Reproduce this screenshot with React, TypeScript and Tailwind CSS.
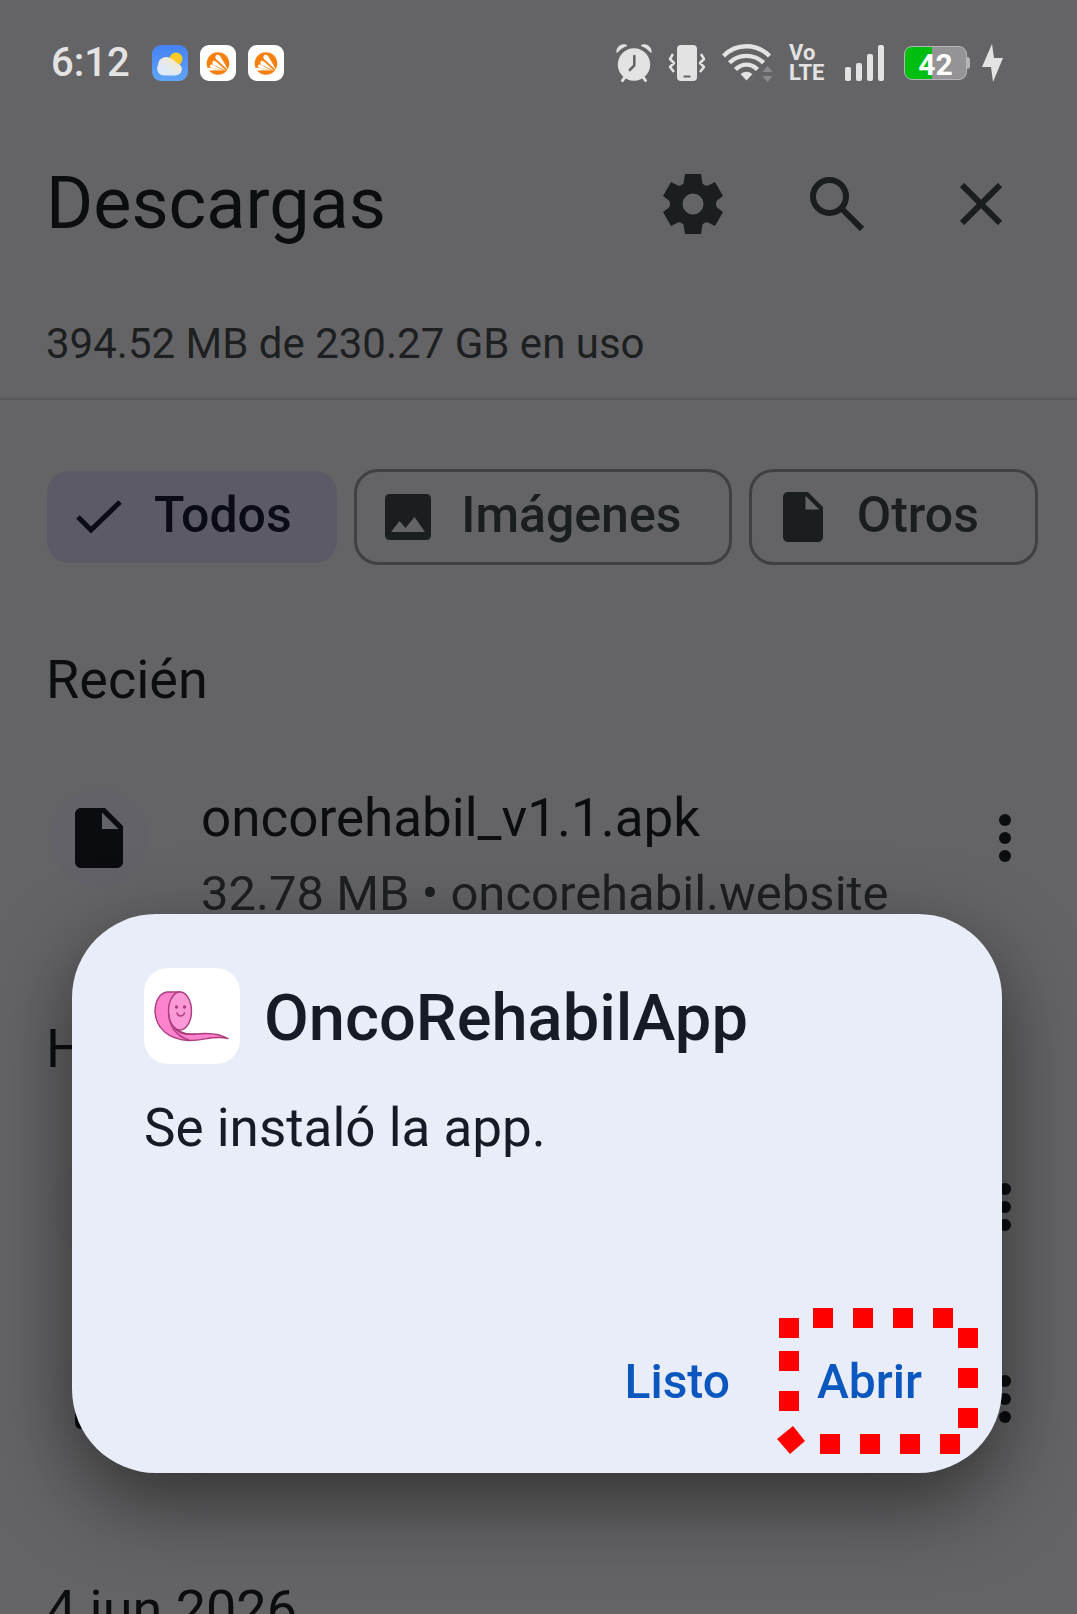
import React from 'react';

interface IconProps {
  className?: string;
}

interface DownloadItem {
  id: string;
  name: string;
  size: string;
  source: string;
}

interface DownloadGroup {
  label: string;
  items: DownloadItem[];
}

const groups: DownloadGroup[] = [
  {
    label: 'Recién',
    items: [{ id: 'a', name: 'oncorehabil_v1.1.apk', size: '32.78 MB', source: 'oncorehabil.website' }],
  },
  {
    label: 'Hoy',
    items: [
      { id: 'b', name: 'oncorehabil_v1.1.apk', size: '32.78 MB', source: 'oncorehabil.website' },
      { id: 'c', name: 'oncorehabil_v1.1.apk', size: '32.78 MB', source: 'oncorehabil.website' },
    ],
  },
  { label: '4 jun 2026', items: [] },
];

const AlarmIcon = ({ className }: IconProps) => (
  <svg viewBox="0 0 36 38" className={className} fill="#e3e3e3">
    <path d="M1 8.500C0 3 6-1 11 1.500C7 3 4 5 1 8.500Z" stroke="#e3e3e3" strokeLinejoin="round" />
    <path d="M35 8.500C36 3 30-1 25 1.500C29 3 32 5 35 8.500Z" stroke="#e3e3e3" strokeLinejoin="round" />
    <circle cx="18" cy="20.500" r="16.200" />
    <path d="M9 33l-2.500 3.500M27 33l2.500 3.500" stroke="#e3e3e3" strokeWidth="3" strokeLinecap="round" />
    <path d="M18.300 12v9.500l-4.500 4.500" stroke="#646466" strokeWidth="2.500" strokeLinecap="round" fill="none" />
  </svg>
);

const VibrateIcon = ({ className }: IconProps) => (
  <svg viewBox="0 0 38 36" className={className} fill="none" stroke="#e3e3e3" strokeWidth="2.500">
    <rect x="9" y="0" width="20" height="36" rx="4" fill="#e3e3e3" stroke="none" />
    <path d="M15.500 31.500h7" stroke="#646466" strokeWidth="2" />
    <path d="M5 9l-3 5 4 4-4 4 4 5M33 9l3 5-4 4 4 4-4 5" strokeLinejoin="round" />
  </svg>
);

const WifiIcon = ({ className }: IconProps) => (
  <svg viewBox="0 0 51 38" className={className} fill="none" stroke="#e3e3e3" strokeWidth="4.400">
    <path d="M1.500 12C14-1 35-1 47.500 12" />
    <path d="M7.500 18.800C16.500 9.500 32.500 9.500 41.500 18.800" />
    <path d="M13.500 25.500C20 19 29 19 35.500 25.500" />
    <path d="M18.500 30Q24.500 25.500 30.500 30L24.500 36.500Z" fill="#e3e3e3" stroke="none" />
    <path d="M40.500 28l5-6 5 6ZM40.500 32l5 6 5-6Z" fill="#8b8b8d" stroke="none" />
  </svg>
);

const SignalIcon = ({ className }: IconProps) => (
  <svg viewBox="0 0 39 36" className={className} fill="#e3e3e3">
    <rect x="0" y="22" width="6" height="14" rx="2" />
    <rect x="11" y="18" width="6" height="18" rx="2" />
    <rect x="22" y="9" width="6" height="27" rx="2" />
    <rect x="33" y="0" width="6" height="36" rx="2" />
  </svg>
);

const BoltIcon = ({ className }: IconProps) => (
  <svg viewBox="0 0 21 38" className={className} fill="#e3e3e3">
    <path d="M10 0L0 23h9l2 15 10-24h-9Z" />
  </svg>
);

const WeatherIcon = ({ className }: IconProps) => (
  <svg viewBox="0 0 36 36" className={className}>
    <defs>
      <linearGradient id="sky" x1="0" y1="0" x2="0" y2="1">
        <stop offset="0" stopColor="#4582f5" />
        <stop offset="1" stopColor="#60a5f6" />
      </linearGradient>
      <linearGradient id="cloud" x1="1" y1="0" x2="0.400" y2="0.700">
        <stop offset="0" stopColor="#fbd35e" />
        <stop offset="0.500" stopColor="#f0ead6" />
        <stop offset="1" stopColor="#dfe9f6" />
      </linearGradient>
    </defs>
    <rect width="36" height="36" rx="9" fill="url(#sky)" />
    <circle cx="24" cy="14" r="6.500" fill="#fdc926" />
    <path d="M12 30.500a7 7 0 0 1-6-10.500 8.500 8.500 0 0 1 14.500-5.500 6 6 0 0 1 4 3.500 6.300 6.300 0 0 1-.5 12.500Z" fill="url(#cloud)" />
  </svg>
);

const AvastIcon = ({ className }: IconProps) => (
  <svg viewBox="0 0 36 36" className={className}>
    <rect width="36" height="36" rx="9" fill="#fff" />
    <circle cx="18" cy="18.500" r="11.300" fill="#f77f0c" />
    <path
      d="M28.500 25.500L16 14C14 10.500 18 8 20.500 11.500ZM26.500 26L13 19.500C11 16.500 13.500 14.500 16 16.500ZM24 26L10.500 22.500C9 20 11 18.800 13 19.800ZM22 26C17 24.500 12 25.500 7.500 25.500L7 23C10 22 15 23.500 22 26Z"
      fill="#fff"
    />
  </svg>
);

const GearIcon = ({ className }: IconProps) => (
  <svg viewBox="0 0 60 60" className={className} fill="currentColor">
    <path
      fillRule="evenodd"
      d="M22 0H38L39.500 9.500Q43 13 46 11L52 8L60 22L54 26.500Q52 30 54 33.500L60 38L52 52L46 49Q43 47 39.500 50.500L38 60H22L20.500 50.500Q17 47 14 49L8 52L0 38L6 33.500Q8 30 6 26.500L0 22L8 8L14 11Q17 13 20.500 9.500ZM30 19.500A10.500 10.500 0 1 0 30 40.500A10.500 10.500 0 1 0 30 19.500Z"
    />
  </svg>
);

const SearchIcon = ({ className }: IconProps) => (
  <svg viewBox="0 0 54 54" className={className} fill="none" stroke="currentColor" strokeWidth="6">
    <circle cx="19.500" cy="19.500" r="16.500" />
    <path d="M31 31L52 52" />
  </svg>
);

const CloseIcon = ({ className }: IconProps) => (
  <svg viewBox="0 0 42 42" className={className} fill="none" stroke="currentColor" strokeWidth="6">
    <path d="M2 2L40 40M40 2L2 40" />
  </svg>
);

const CheckIcon = ({ className }: IconProps) => (
  <svg viewBox="0 0 46 34" className={className} fill="none" stroke="currentColor" strokeWidth="5">
    <path d="M2 17L15 30L44 2" />
  </svg>
);

const ImageIcon = ({ className }: IconProps) => (
  <svg viewBox="0 0 46 46" className={className} fill="currentColor">
    <path
      fillRule="evenodd"
      d="M5 0H41Q46 0 46 5V41Q46 46 41 46H5Q0 46 0 41V5Q0 0 5 0ZM6 38H40L29.500 23L20.500 34L14.500 27Z"
    />
  </svg>
);

const FileIcon = ({ className }: IconProps) => (
  <svg viewBox="4 2 16 20" className={className} fill="currentColor">
    <path d="M6 2c-1.100 0-2 .9-2 2v16c0 1.100.9 2 2 2h12c1.100 0 2-.9 2-2V8l-6-6H6zm7 7V3.500L18.500 9H13z" />
  </svg>
);

const KebabIcon = ({ className }: IconProps) => (
  <svg viewBox="0 0 12 48" className={className} fill="currentColor">
    <circle cx="6" cy="6" r="6" />
    <circle cx="6" cy="24" r="6" />
    <circle cx="6" cy="42" r="6" />
  </svg>
);

// Pink bandage roll with a smile
const AppLogo = ({ className }: IconProps) => (
  <svg viewBox="0 0 96 96" className={className} stroke="#ad3c80" strokeWidth="1.400" strokeLinejoin="round">
    <path d="M36 24H23C15 25 11 34 11 44C12 60 24 71 44 72.500C60 73 68 67 84 70.500C74 65 62 65 52 66C42 67 34 64 30 58Z" fill="#fb82cb" />
    <ellipse cx="36" cy="43" rx="11.500" ry="19" fill="#fb9ad6" />
    <path d="M25 46C25 58 32 68 45 72" fill="none" />
    <path d="M30 59C35 66 42 67 52 66" fill="none" />
    <g fill="#ad3c80" stroke="none">
      <circle cx="32.500" cy="39" r="1.700" />
      <circle cx="40.500" cy="39" r="1.700" />
    </g>
    <path d="M33 45C34 49 39 49 40.500 45" fill="none" strokeLinecap="round" />
  </svg>
);

// Dotted frame drawn round the "Abrir" button
const DottedFrame = ({ className }: IconProps) => (
  <svg viewBox="0 0 202 148" className={className} fill="#ff0000">
    {[36, 76, 116, 156].map((x) => (
      <rect key={x} x={x} y="0" width="20" height="20" />
    ))}
    {[20, 60, 100].map((y) => (
      <rect key={y} x="181" y={y} width="20" height="20" />
    ))}
    {[43, 83, 123, 163].map((x) => (
      <rect key={x} x={x} y="126" width="20" height="20" />
    ))}
    {[10, 43, 83].map((y) => (
      <rect key={y} x="2" y={y} width="20" height="20" />
    ))}
    <path d="M0 131L16 118L28 133L13 146Z" />
  </svg>
);

const StatusBar = () => (
  <div className="flex items-center justify-between pt-[43px] pr-[74px] pl-[51px] text-[#e3e3e3]">
    <div className="flex items-center gap-3">
      <span className="mr-[10px] text-[40px] leading-10 font-medium">6:12</span>
      <WeatherIcon className="size-9" />
      <AvastIcon className="size-9" />
      <AvastIcon className="size-9" />
    </div>
    <div className="flex items-center">
      <AlarmIcon className="h-[38px] w-9" />
      <VibrateIcon className="ml-4 h-9 w-[38px]" />
      <WifiIcon className="ml-4 h-[38px] w-[51px]" />
      <span className="ml-4 w-9 text-[22px] leading-5 font-bold">
        Vo
        <br />
        LTE
      </span>
      <SignalIcon className="ml-5 h-9 w-[39px]" />
      <div className="ml-5 flex items-center">
        <div className="flex h-[34px] w-[63px] items-center justify-center rounded-lg border border-[#b5b5b7] bg-linear-to-r from-[#00be10] from-45% to-[#949496] to-45% pt-1 text-[30px] leading-8 font-bold text-white">
          42
        </div>
        <div className="h-3 w-[3px] rounded-r-sm bg-[#b5b5b7]" />
      </div>
      <BoltIcon className="ml-3 h-[38px] w-[21px]" />
    </div>
  </div>
);

const Header = () => (
  <header className="border-b-2 border-[#58585a] pt-[75px] pr-[75px] pb-[29px] pl-[46px]">
    <div className="flex items-center justify-between">
      <h1 className="text-[72px] leading-[92px] text-[#0b0d0f]">Descargas</h1>
      <div className="flex items-center text-[#1b1e21]">
        <button aria-label="Configuración">
          <GearIcon className="size-[60px]" />
        </button>
        <button aria-label="Buscar" className="ml-[87px]">
          <SearchIcon className="size-[54px]" />
        </button>
        <button aria-label="Cerrar" className="ml-24">
          <CloseIcon className="size-[42px]" />
        </button>
      </div>
    </div>
    <p className="mt-[69px] text-[42px] leading-[50px] text-[#1d1f21]">394.52 MB de 230.27 GB en uso</p>
  </header>
);

const Filters = () => (
  <div className="grid grid-cols-[290fr_377fr_289fr] items-center gap-[17px] pt-[69px] pr-[39px] pl-[47px] text-[50px] leading-[60px] font-medium text-[#1b1e21]">
    <button className="flex h-[92px] items-center rounded-[22px] bg-[#5b5a66] pl-[29px] text-[#0b0b18]">
      <CheckIcon className="mr-8 h-[34px] w-[46px]" />
      <span className="pb-1">Todos</span>
    </button>
    <button className="flex h-24 items-center rounded-3xl border-[3px] border-[#3f4042] pl-7">
      <ImageIcon className="mr-[30px] size-[46px]" />
      <span className="pb-1">Imágenes</span>
    </button>
    <button className="flex h-24 items-center rounded-3xl border-[3px] border-[#3f4042] pl-[31px]">
      <FileIcon className="mr-[34px] h-[50px] w-10" />
      <span className="pb-1">Otros</span>
    </button>
  </div>
);

const DownloadRow = ({ item }: { item: DownloadItem }) => (
  <li className="flex h-48 items-center pr-[66px] pl-[50px]">
    <div className="flex size-[98px] shrink-0 items-center justify-center rounded-full bg-[#626268] text-[#0b0c10]">
      <FileIcon className="h-[60px] w-12" />
    </div>
    <div className="mt-9 ml-[53px] grow">
      <p className="text-[53px] leading-[76px] text-[#0b0d0f]">{item.name}</p>
      <p className="text-[49px] leading-[76px] text-[#1d1f21]">
        {item.size} • {item.source}
      </p>
    </div>
    <button aria-label="Más opciones" className="text-[#0b0d0f]">
      <KebabIcon className="h-12 w-3" />
    </button>
  </li>
);

const InstallDialog = () => (
  <div className="fixed inset-0 flex items-end pr-[75px] pb-[141px] pl-[72px]">
    <div
      role="dialog"
      aria-labelledby="dialog-title"
      className="w-full rounded-[84px] bg-[#e9edf9] px-[72px] pt-[54px] pb-[55px] text-[#171a27] shadow-[0_28px_80px_rgba(0,0,0,0.5)]"
    >
      <div className="flex items-start gap-6">
        <div className="size-24 rounded-3xl bg-white">
          <AppLogo className="size-24" />
        </div>
        <h2 id="dialog-title" className="text-[65px] leading-[100px] font-medium">
          OncoRehabilApp
        </h2>
      </div>
      <p className="mt-[25px] text-[53px] leading-[70px]">Se instaló la app.</p>
      <div className="mt-[183px] flex justify-end text-[48px] font-medium text-[#0b57c0]">
        <button className="h-[72px] px-2">Listo</button>
        <div className="relative ml-[71px]">
          <button className="h-[72px] px-2">Abrir</button>
          <DottedFrame className="pointer-events-none absolute -top-[38px] -left-8 h-[148px] w-[202px]" />
        </div>
      </div>
    </div>
  </div>
);

export default function App() {
  return (
    <div className="h-screen overflow-hidden bg-[#646466] font-['Roboto',sans-serif]">
      <StatusBar />
      <Header />
      <main>
        <Filters />
        {groups.map((group) => (
          <section key={group.label}>
            <h2 className="px-[46px] pt-[77px] pb-6 text-[54px] leading-[76px] text-[#0b0d0f]">{group.label}</h2>
            <ul>
              {group.items.map((item) => (
                <DownloadRow key={item.id} item={item} />
              ))}
            </ul>
          </section>
        ))}
      </main>
      <InstallDialog />
    </div>
  );
}
